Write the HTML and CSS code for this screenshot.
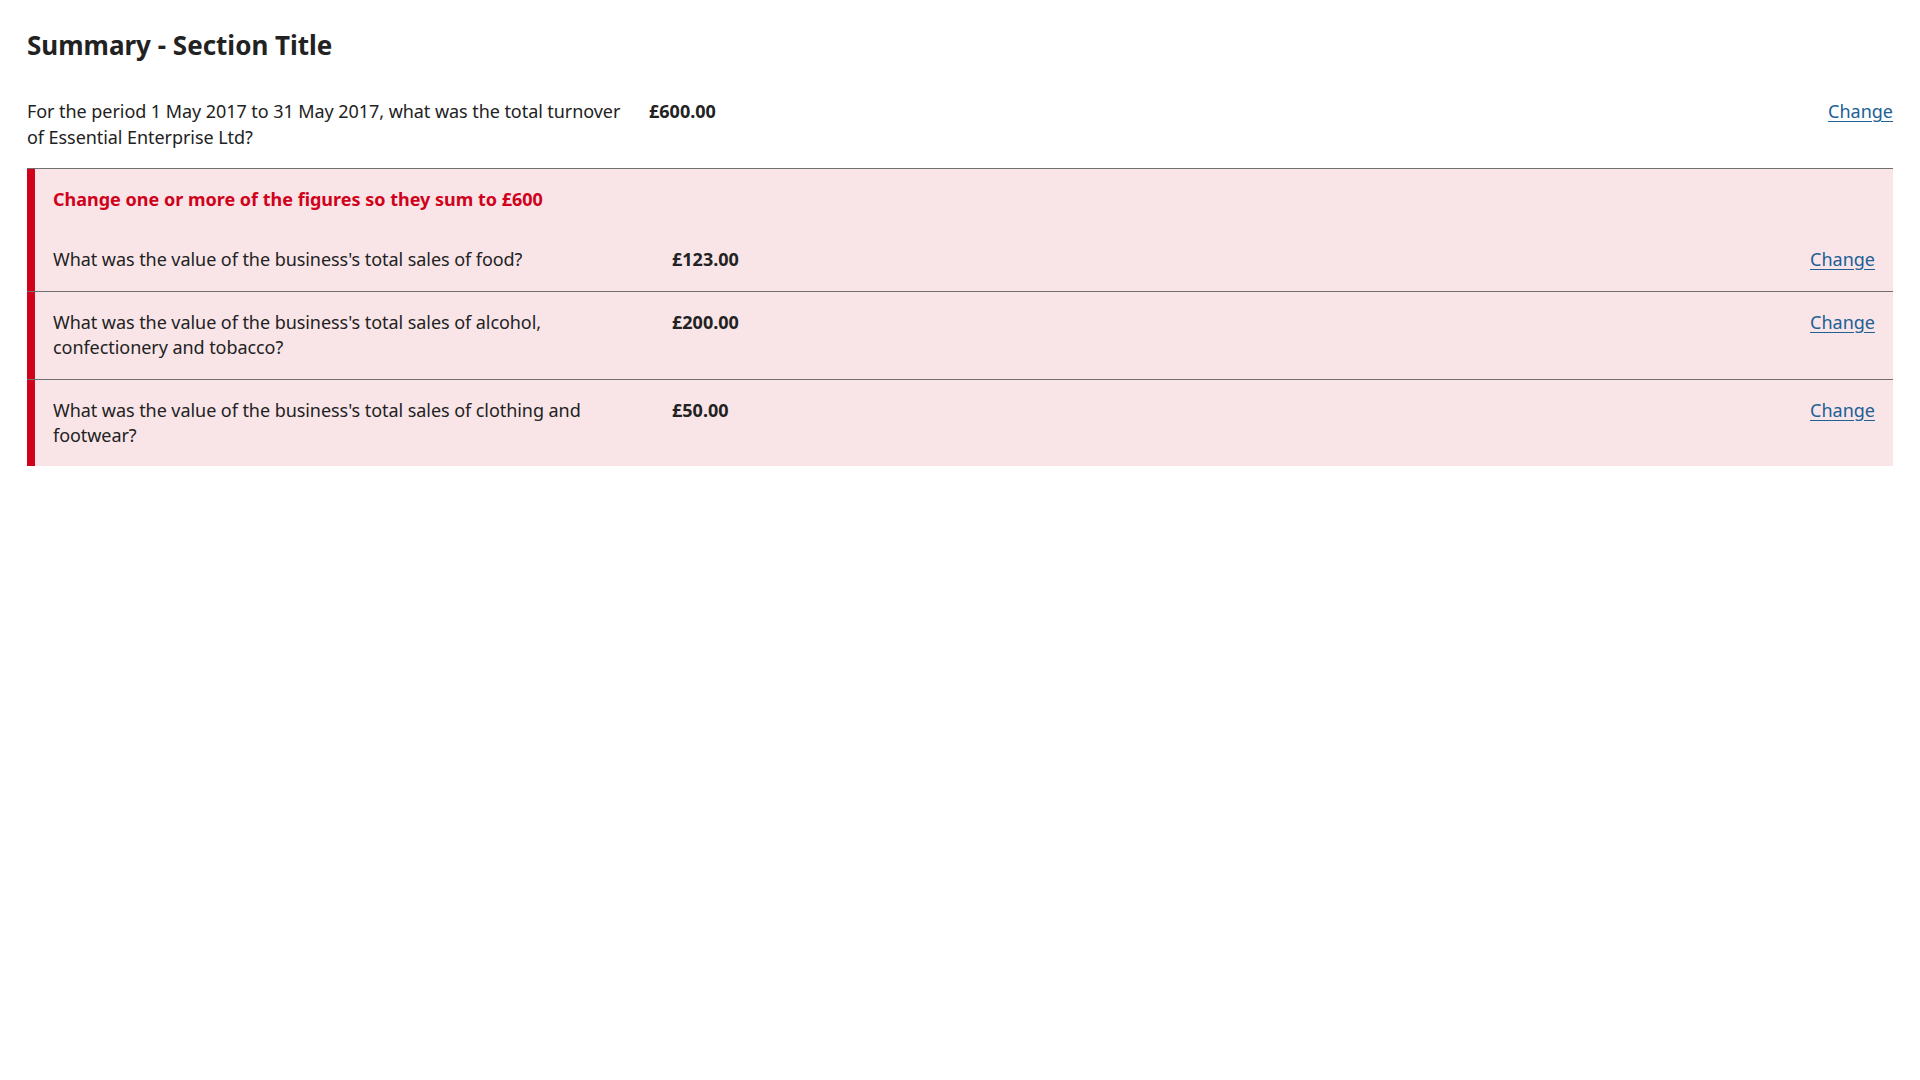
FILE: index.html
```html
<!DOCTYPE html>
<html lang="en">
<head>
<meta charset="utf-8">
<title>Summary - Section Title</title>
<link rel="stylesheet" href="styles.css">
</head>
<body>
<main class="page">
  <h2 class="title">Summary - Section Title</h2>
  <div class="summary">
    <div class="row row--top">
      <div class="key">For the period 1 May 2017 to 31 May 2017, what was the total turnover of Essential Enterprise Ltd?</div>
      <div class="value">£600.00</div>
      <div class="action"><a href="#" class="link">Change</a></div>
    </div>
    <div class="group group--error">
      <p class="error-msg">Change one or more of the figures so they sum to £600</p>
      <div class="row row--first">
        <div class="key">What was the value of the business's total sales of food?</div>
        <div class="value">£123.00</div>
        <div class="action"><a href="#" class="link">Change</a></div>
      </div>
      <div class="row">
        <div class="key">What was the value of the business's total sales of alcohol, confectionery and tobacco?</div>
        <div class="value">£200.00</div>
        <div class="action"><a href="#" class="link">Change</a></div>
      </div>
      <div class="row row--last">
        <div class="key">What was the value of the business's total sales of clothing and footwear?</div>
        <div class="value">£50.00</div>
        <div class="action"><a href="#" class="link">Change</a></div>
      </div>
    </div>
  </div>
</main>
</body>
</html>
```
FILE: styles.css
```css
html, body {
  margin: 0;
  padding: 0;
  background: #ffffff;
}

body {
  font-family: "Noto Sans", "Open Sans", "Liberation Sans", sans-serif;
  font-size: 18px;
  line-height: 1.4;
  color: #222222;
}

.page {
  padding: 27px 27px 0 27px;
}

.title {
  margin: 0 0 18px 0;
  font-size: 26px;
  line-height: 1.4;
  font-weight: 700;
  color: #222222;
}

.summary {
  display: flex;
  flex-direction: column;
}

.row {
  display: grid;
  grid-template-columns: 595px 1fr auto;
  column-gap: 24px;
  align-items: start;
  padding: 17.5px 18px 19px 0;
  border-top: 1px solid #707071;
}

.key {
  margin: 0;
  letter-spacing: -0.06px;
}

.row--top {
  grid-template-columns: 598px 1fr auto;
  padding: 18px 0 18px 0;
  border-top: none;
  border-bottom: 1px solid #707071;
}

.row--first {
  border-top: none;
  padding-top: 0;
}

.row--last {
  padding-bottom: 18px;
}

.group--error {
  background: linear-gradient(to right, #d0021b 0, #d0021b 8px, #f9e5e8 8px);
}

.group--error .row {
  padding-left: 26px;
}

.error-msg {
  margin: 0;
  padding: 18px 18px 35px 26px;
  font-weight: 700;
  color: #d0021b;
}

.value {
  margin: 0;
  font-weight: 700;
}

.action {
  margin: 0;
  text-align: right;
}

.link {
  color: #206095;
  text-decoration: underline;
  text-underline-offset: 3px;
}
```
